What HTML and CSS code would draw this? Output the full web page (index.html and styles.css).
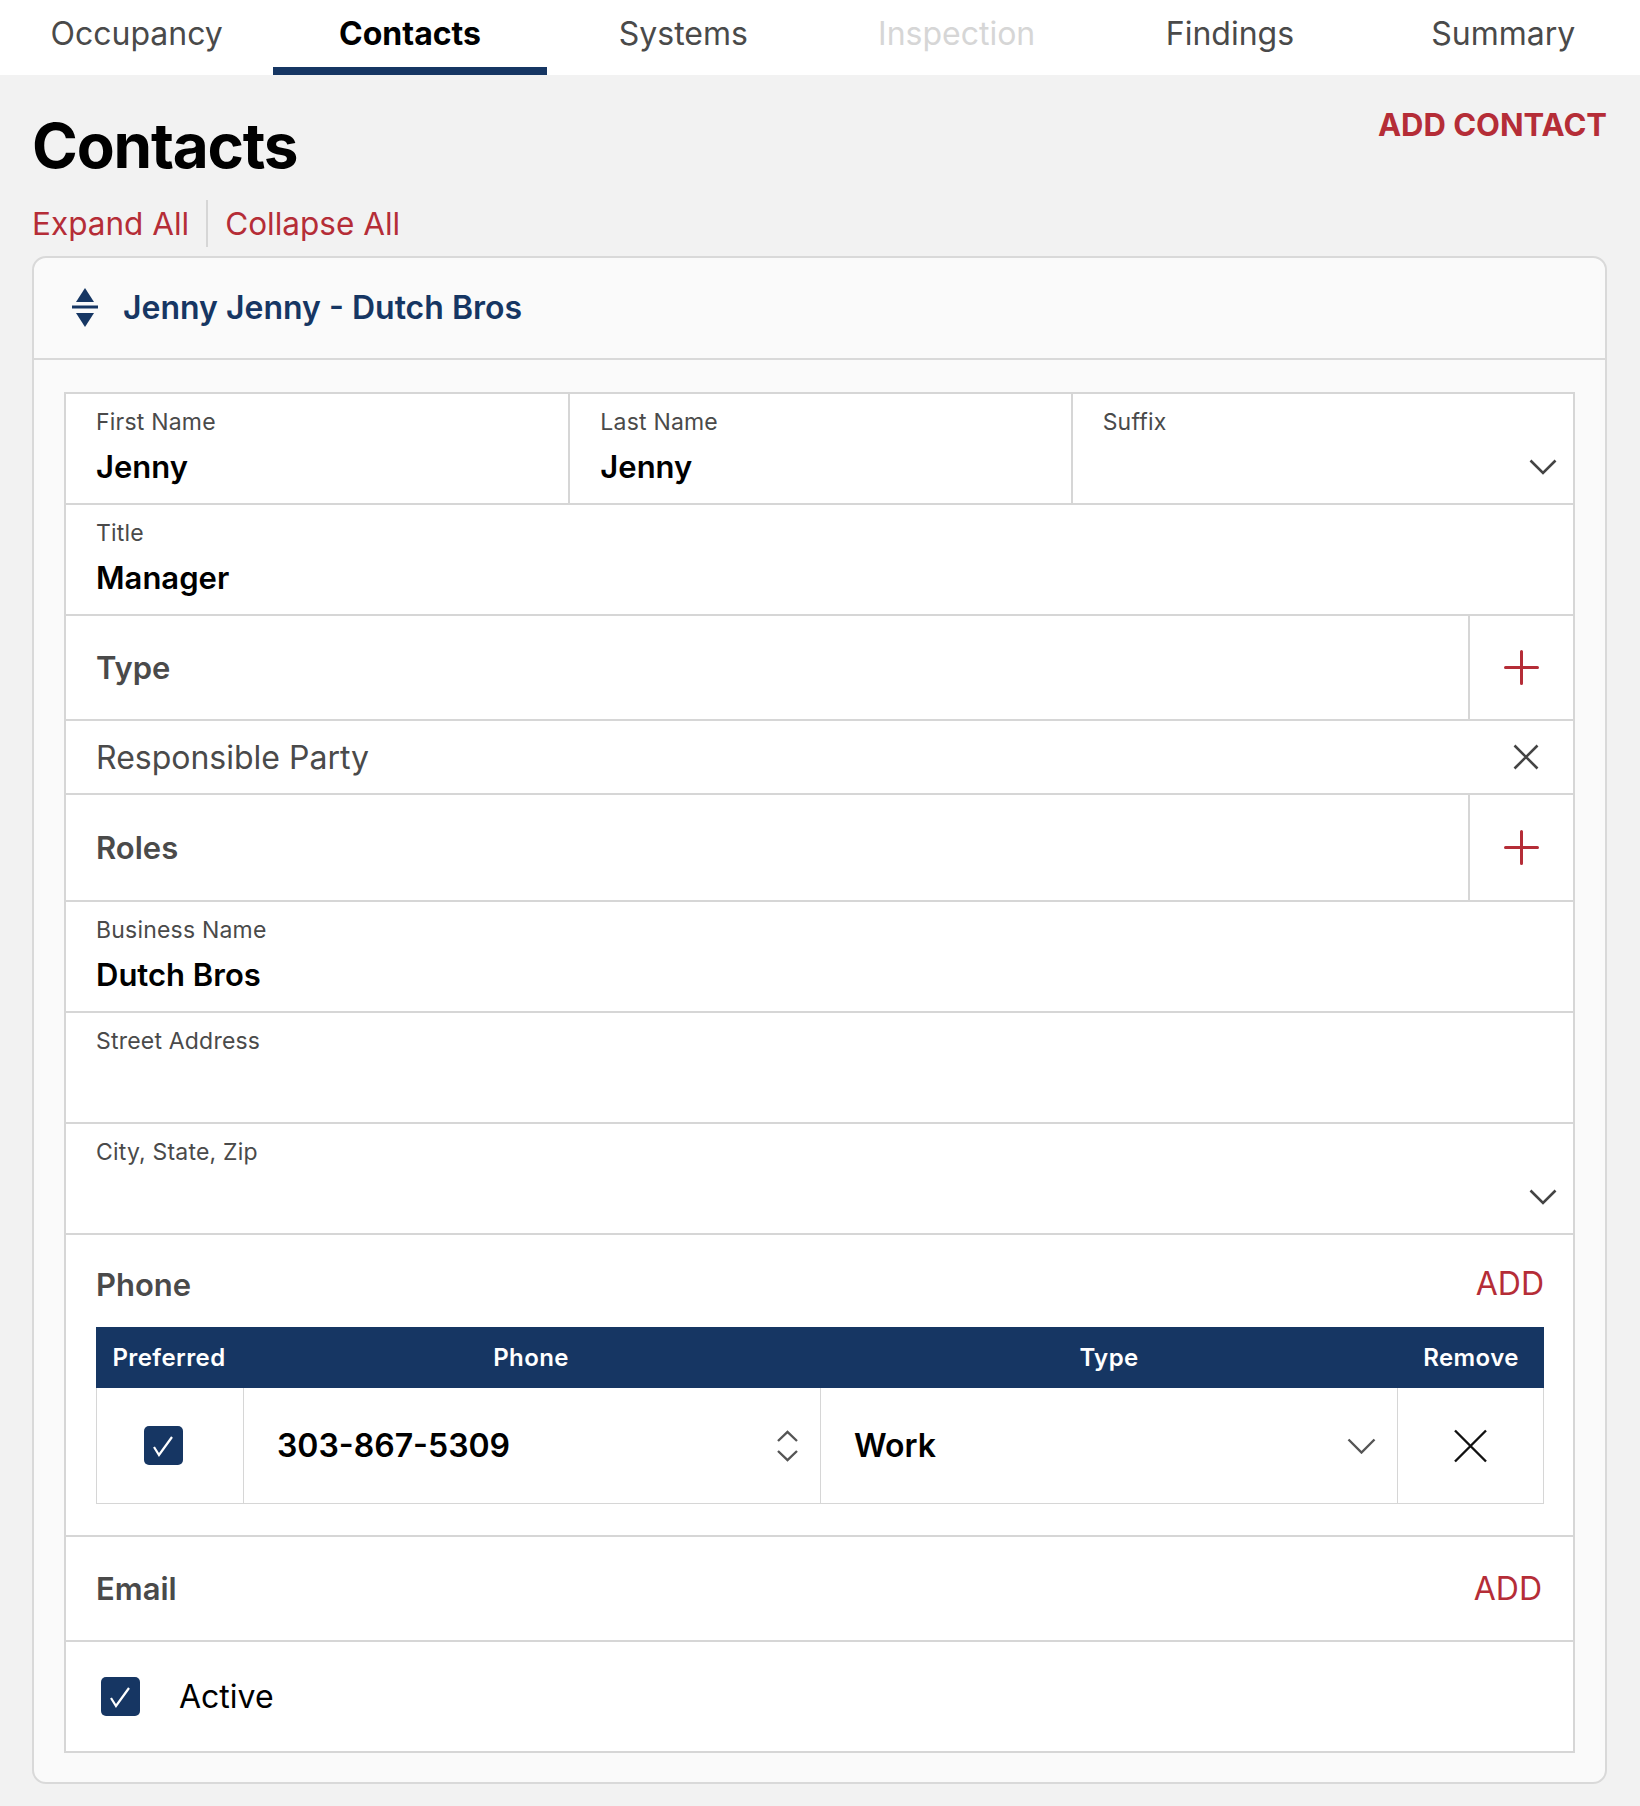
FILE: index.html
```html
<!DOCTYPE html>
<html lang="en">

<head>
    <meta charset="UTF-8">
    <meta name="viewport" content="width=device-width, initial-scale=1.0">
    <title>Contacts</title>

    <link rel="stylesheet" href="styles.css">
</head>

<body>
    <nav class="tabs">
        <a class="tab">Occupancy</a>
        <a class="tab active">Contacts</a>
        <a class="tab">Systems</a>
        <a class="tab disabled">Inspection</a>
        <a class="tab">Findings</a>
        <a class="tab">Summary</a>
    </nav>

    <main class="page">
        <div class="page-head">
            <h1>Contacts</h1>
            <a class="add-contact">ADD CONTACT</a>
        </div>
        <div class="toggles">
            <a class="toggle">Expand All</a>
            <span class="sep"></span>
            <a class="toggle">Collapse All</a>
        </div>

        <section class="card">
            <header class="card-head">
                <svg class="sort-icon" width="26" height="40" viewBox="0 0 26 40">
                    <polygon points="13,0 22,14 4,14" />
                    <rect x="0" y="17.5" width="26" height="3" />
                    <polygon points="4,25 22,25 13,39" />
                </svg>
                <h2>Jenny Jenny - Dutch Bros</h2>
            </header>

            <div class="card-body">
                <div class="form">
                    <div class="row cols-3">
                        <div class="field">
                            <div class="label">First Name</div>
                            <div class="value">Jenny</div>
                        </div>
                        <div class="field">
                            <div class="label">Last Name</div>
                            <div class="value">Jenny</div>
                        </div>
                        <div class="field select">
                            <div class="label">Suffix</div>
                            <div class="value">
                                <svg width="28" height="16" viewBox="0 0 28 16"><polyline class="stroke-dark" points="1.5,1.5 14,14 26.5,1.5" /></svg>
                            </div>
                        </div>
                    </div>
                    <div class="row field">
                        <div class="label">Title</div>
                        <div class="value">Manager</div>
                    </div>
                    <div class="row list-head">
                        <span class="section-title">Type</span>
                        <span class="icon-cell">
                            <svg width="35" height="35" viewBox="0 0 35 35"><path class="stroke-red" d="M17.5 1.5V33.5M1.5 17.5H33.5" /></svg>
                        </span>
                    </div>
                    <div class="row list-item">
                        <span>Responsible Party</span>
                        <svg width="26" height="26" viewBox="0 0 26 26"><path class="stroke-dark" d="M1.5 1.5L24.5 24.5M24.5 1.5L1.5 24.5" /></svg>
                    </div>
                    <div class="row list-head roles">
                        <span class="section-title">Roles</span>
                        <span class="icon-cell">
                            <svg width="35" height="35" viewBox="0 0 35 35"><path class="stroke-red" d="M17.5 1.5V33.5M1.5 17.5H33.5" /></svg>
                        </span>
                    </div>
                    <div class="row field">
                        <div class="label">Business Name</div>
                        <div class="value">Dutch Bros</div>
                    </div>
                    <div class="row field">
                        <div class="label">Street Address</div>
                        <div class="value"></div>
                    </div>
                    <div class="row field select">
                        <div class="label">City, State, Zip</div>
                        <div class="value">
                            <svg width="28" height="16" viewBox="0 0 28 16"><polyline class="stroke-dark" points="1.5,1.5 14,14 26.5,1.5" /></svg>
                        </div>
                    </div>

                    <div class="row phone">
                        <div class="phone-head">
                            <span class="section-title">Phone</span>
                            <a class="add-link">ADD</a>
                        </div>
                        <div class="pt-head">
                            <span>Preferred</span>
                            <span>Phone</span>
                            <span>Type</span>
                            <span>Remove</span>
                        </div>
                        <div class="pt-row">
                            <div class="pt-cell pt-check">
                                <span class="check">
                                    <svg width="39" height="39" viewBox="0 0 39 39"><polyline points="10,21 15,29 28,11" /></svg>
                                </span>
                            </div>
                            <div class="pt-cell pt-input">
                                <span>303-867-5309</span>
                                <svg width="23" height="32" viewBox="0 0 23 32"><path class="stroke-mid" d="M2 11L11.5 2L21 11M2 21L11.5 30L21 21" /></svg>
                            </div>
                            <div class="pt-cell pt-input">
                                <span>Work</span>
                                <svg width="29" height="16" viewBox="0 0 29 16"><polyline class="stroke-mid" points="1.5,1.5 14.5,14.5 27.5,1.5" /></svg>
                            </div>
                            <div class="pt-cell pt-remove">
                                <svg width="35" height="34" viewBox="0 0 35 34"><path class="stroke-black" d="M2 1.5L33 32.5M33 1.5L2 32.5" /></svg>
                            </div>
                        </div>
                    </div>

                    <div class="row email">
                        <span class="section-title">Email</span>
                        <a class="add-link">ADD</a>
                    </div>
                    <div class="row active-row">
                        <span class="check">
                            <svg width="39" height="39" viewBox="0 0 39 39"><polyline points="10,21 15,29 28,11" /></svg>
                        </span>
                        <span>Active</span>
                    </div>
                </div>
            </div>
        </section>
    </main>
</body>

</html>
```

FILE: styles.css
```css
* {
    box-sizing: border-box;
}

body {
    margin: 0;
    background-color: #f2f2f2;
    font-family: Inter, "Noto Sans", sans-serif;
    color: #000;
}

a {
    text-decoration: none;
    cursor: pointer;
}

/* tabs */
.tabs {
    display: flex;
    height: 75px;
    background-color: white;
}

.tab {
    flex: 1;
    display: flex;
    justify-content: center;
    align-items: center;
    font-size: 32px;
    color: #4a4a4a;
    border-bottom: 8px solid transparent;
}

.tab.active {
    color: #000;
    font-weight: 700;
    border-bottom-color: #163663;
}

.tab.disabled {
    color: #d6d6d6;
}

/* page header */
.page {
    padding: 0 33px 20px 32px;
}

.page-head {
    display: flex;
    justify-content: space-between;
    align-items: flex-start;
}

.page-head h1 {
    margin: 40px 0 0;
    font-size: 62px;
    line-height: 1;
    font-weight: 700;
    letter-spacing: -1.2px;
}

.add-contact {
    margin-top: 34px;
    font-size: 31px;
    line-height: 1;
    font-weight: 700;
    color: #b52d37;
}

.toggles {
    display: flex;
    height: 47px;
    margin-top: 23px;
}

.toggle {
    font-size: 31.5px;
    line-height: 47px;
    color: #b52d37;
}

.sep {
    width: 2px;
    background-color: #d6d6d6;
    margin: 0 17px 0 17px;
}

/* card */
.card {
    margin-top: 9px;
    border: 2px solid #d9d9d9;
    border-radius: 14px;
    background-color: #fafafa;
}

.card-head {
    height: 102px;
    display: flex;
    align-items: center;
    gap: 25px;
    padding-left: 38px;
    border-bottom: 2px solid #d9d9d9;
}

.sort-icon {
    fill: #163663;
}

.card-head h2 {
    margin: 0;
    font-size: 32px;
    line-height: 1;
    font-weight: 600;
    color: #163663;
}

.card-body {
    padding: 32px 30px 29px;
}

.form {
    background-color: white;
    border: 2px solid #d6d6d6;
}

.row {
    border-bottom: 2px solid #d6d6d6;
}

.row:last-child {
    border-bottom: 0;
}

/* fields */
.cols-3 {
    display: grid;
    grid-template-columns: 1fr 1fr 1fr;
}

.cols-3>.field+.field {
    border-left: 2px solid #d6d6d6;
}

.field {
    padding: 17px 30px 21px;
}

.field .label {
    font-size: 23px;
    line-height: 1;
    color: #4a4a4a;
    letter-spacing: 0.2px;
}

.field .value {
    margin-top: 17px;
    height: 31px;
    font-size: 31px;
    line-height: 1;
    font-weight: 600;
}

.field.select {
    padding-right: 16px;
}

.field.select .value {
    display: flex;
    justify-content: flex-end;
    align-items: center;
}

.section-title {
    font-size: 31px;
    line-height: 1;
    font-weight: 600;
    color: #4a4a4a;
}

.list-head {
    height: 105px;
    display: flex;
}

.list-head.roles {
    height: 107px;
}

.list-head .section-title {
    flex: 1;
    display: flex;
    align-items: center;
    padding-left: 30px;
}

.icon-cell {
    width: 105px;
    display: flex;
    justify-content: center;
    align-items: center;
    border-left: 2px solid #d6d6d6;
}

.list-item {
    height: 74px;
    display: flex;
    justify-content: space-between;
    align-items: center;
    padding: 0 34px 0 30px;
    font-size: 32px;
    color: #4a4a4a;
}

.stroke-dark,
.stroke-mid,
.stroke-red,
.stroke-black {
    fill: none;
    stroke-width: 2.6;
}

.stroke-dark {
    stroke: #444;
}

.stroke-mid {
    stroke: #555;
    stroke-width: 2.4;
}

.stroke-red {
    stroke: #b52d37;
    stroke-width: 3;
    stroke-linecap: round;
}

.stroke-black {
    stroke: #111;
    stroke-width: 2.4;
}

.add-link {
    font-size: 32px;
    line-height: 1;
    color: #b52d37;
}

/* phone table */
.phone {
    padding: 30px 29px 31px 30px;
}

.phone-head {
    height: 38px;
    display: flex;
    justify-content: space-between;
    align-items: center;
    margin-bottom: 24px;
}

.pt-head,
.pt-row {
    display: grid;
    grid-template-columns: 146px 1fr 1fr 146px;
}

.pt-head {
    height: 61px;
    align-items: center;
    text-align: center;
    background-color: #163663;
    color: white;
    font-size: 24px;
    font-weight: 600;
    letter-spacing: 0.4px;
}

.pt-row {
    height: 116px;
    border: 1px solid #d6d6d6;
    border-top: 0;
}

.pt-cell {
    display: flex;
    align-items: center;
}

.pt-cell+.pt-cell {
    border-left: 1px solid #d6d6d6;
}

.pt-check {
    padding-left: 47px;
}

.pt-input {
    justify-content: space-between;
    padding: 0 21px 0 33px;
    font-size: 32px;
    font-weight: 600;
}

.pt-remove {
    justify-content: center;
}

.check {
    width: 39px;
    height: 39px;
    border-radius: 5px;
    background-color: #163663;
    display: flex;
}

.check polyline {
    fill: none;
    stroke: white;
    stroke-width: 2.2;
}

/* email, active */
.email {
    height: 105px;
    display: flex;
    justify-content: space-between;
    align-items: center;
    padding: 0 31px 0 30px;
}

.active-row {
    height: 109px;
    display: flex;
    align-items: center;
    gap: 39px;
    padding-left: 35px;
    font-size: 32px;
}
```
